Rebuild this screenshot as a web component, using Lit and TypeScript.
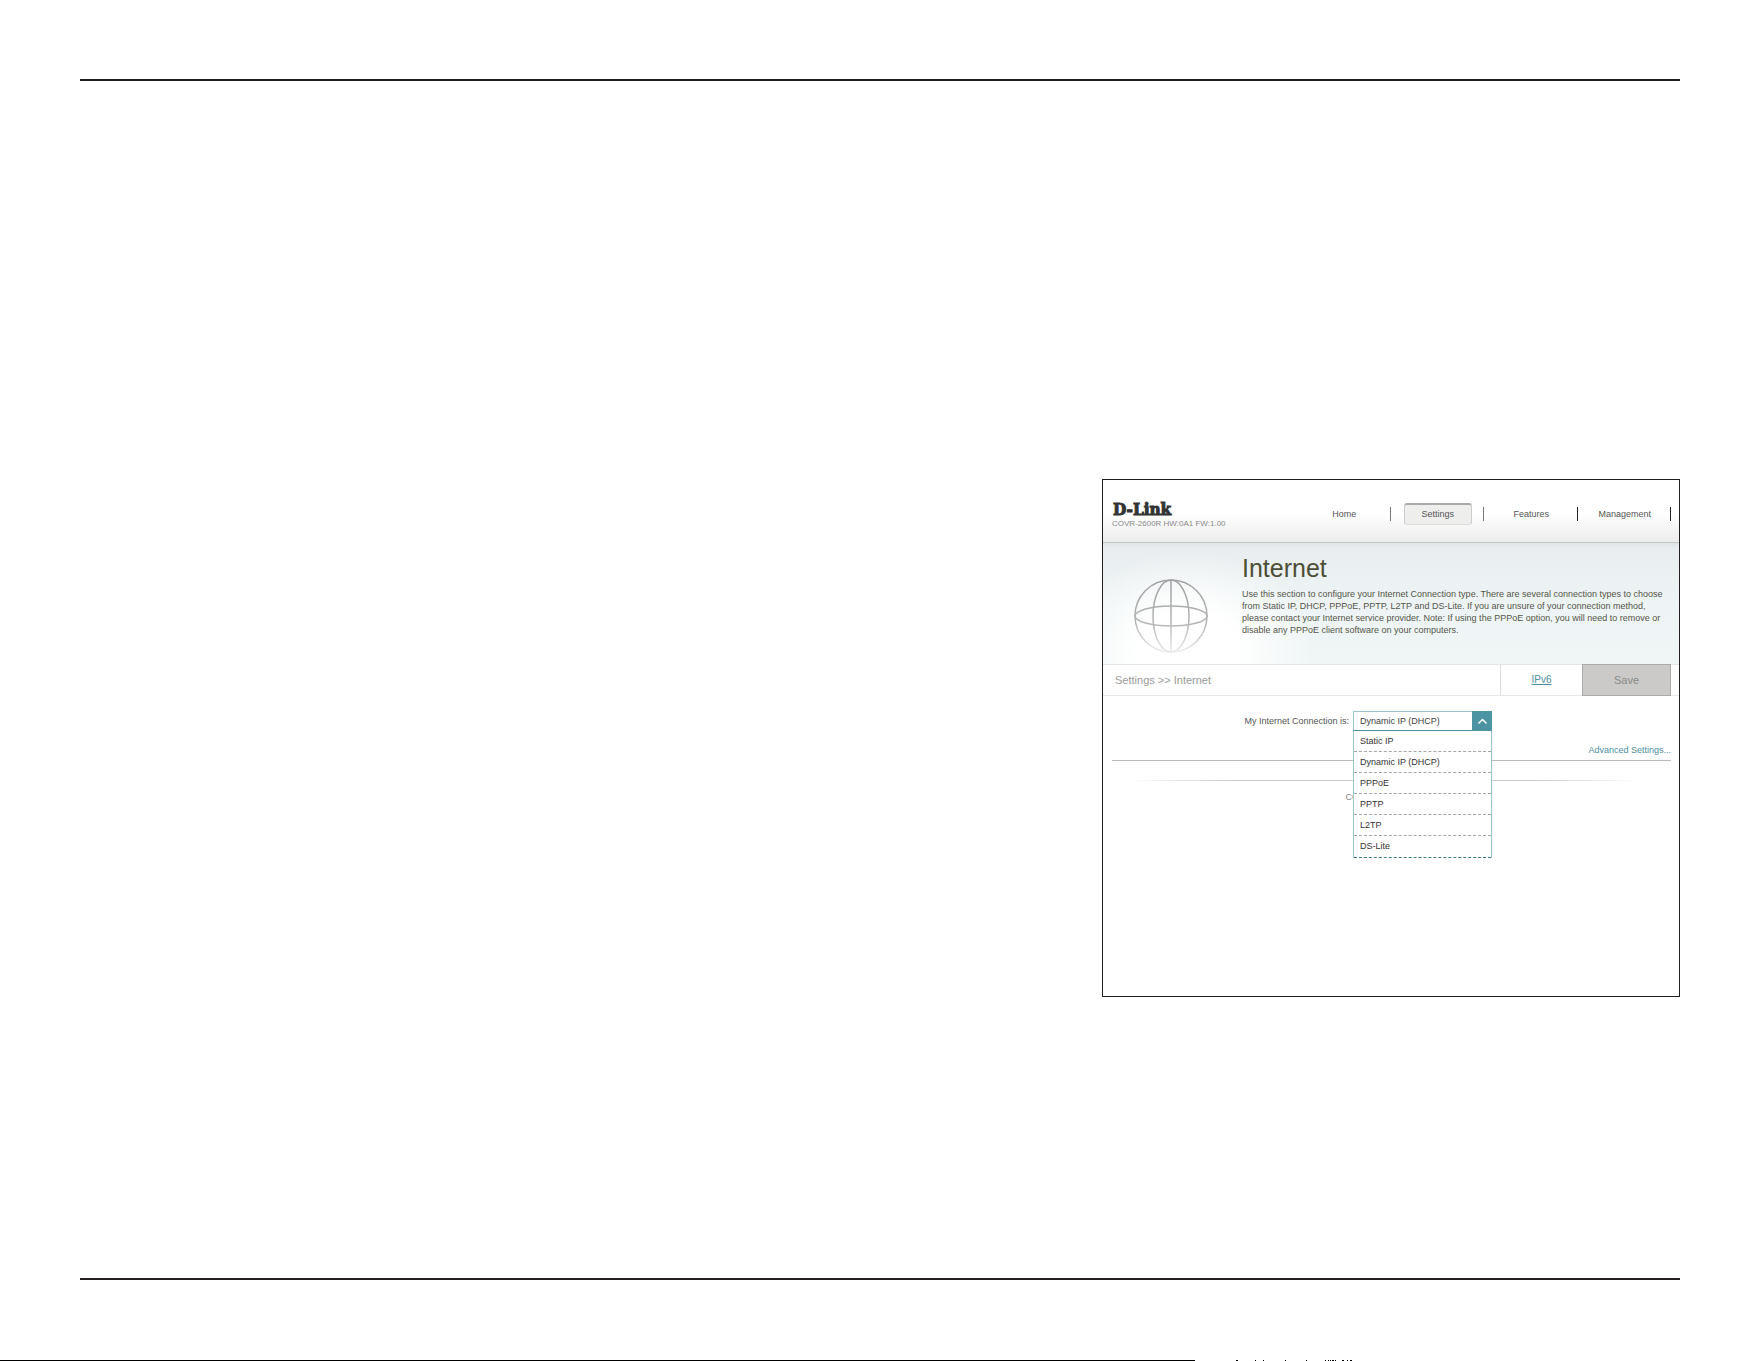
import { LitElement, html, css, svg } from "lit";
import { customElement, state } from "lit/decorators.js";

const NAV = ["Home", "Settings", "Features", "Management"];

const CONNECTION_TYPES = [
    "Static IP",
    "Dynamic IP (DHCP)",
    "PPPoE",
    "PPTP",
    "L2TP",
    "DS-Lite",
];

// [start, width] of the marks cut off by the page's lower edge
const EDGE_MARKS = [
    [1236, 2], [1255, 1], [1263, 1], [1285, 1], [1306, 1],
    [1325, 1], [1328, 1], [1330, 1], [1332, 2], [1335, 1],
    [1342, 2], [1347, 1], [1350, 2],
];

@customElement("connection-picker")
export class ConnectionPicker extends LitElement
{
    @state() value = "Dynamic IP (DHCP)";
    @state() open = true;

    static styles = css`
        :host
        {
            display         : flex;
            justify-content : center;
            align-items     : center;
            gap             : 4px;
            color           : #555;
        }

        .side
        {
            flex       : 1;
            text-align : right;
        }

        .side.end
        {
            flex : 0 1 183px;
        }

        .box
        {
            position : relative;
            flex     : 0 0 139px;
        }

        .select
        {
            display       : block;
            width         : 100%;
            height        : 20px;
            box-sizing    : border-box;
            margin        : 0;
            padding       : 0 24px 0 6px;
            border        : 1px solid #9cc5cd;
            border-bottom : 1px solid #4a8fa0;
            border-radius : 0;
            appearance    : none;
            background    : #fff;
            color         : #444;
            font          : inherit;
        }

        .arrow
        {
            position       : absolute;
            top            : 0;
            right          : 0;
            width          : 20px;
            height         : 20px;
            background     : #4c93a3;
            pointer-events : none;
        }

        .list
        {
            position     : absolute;
            z-index      : 1;
            top          : 100%;
            left         : 0;
            right        : 0;
            margin       : 0;
            padding      : 0;
            border       : solid #9cc5cd;
            border-width : 0 1px;
            background   : #fff;
            list-style   : none;
        }

        .option
        {
            height        : 21px;
            box-sizing    : border-box;
            padding       : 0 6px;
            border-bottom : 1px dashed #a5a5a5;
            color         : #333;
            line-height   : 20px;
            cursor        : pointer;
        }

        .option:last-child
        {
            height              : 22px;
            border-bottom-color : #3f7986;
        }
    `;

    pick (type: string)
    {
        this.value = type;
        this.open = false;
    }

    toggle (event: Event)
    {
        event.preventDefault();
        this.open = !this.open;
    }

    render ()
    {
        return html`
            <label class="side" for="type">My Internet Connection is:</label>
            <div class="box">
                <select id="type" class="select" .value=${ this.value } @mousedown=${ this.toggle }>
                    ${ CONNECTION_TYPES.map( type => html`
                        <option ?selected=${ type === this.value }>${ type }</option>
                    ` ) }
                </select>
                <svg class="arrow" viewBox="0 0 20 20" aria-hidden="true">
                    <path d="M6.500 12.500l4-4 4 4" fill="none" stroke="#fff" stroke-width="1.500"/>
                </svg>
                ${ this.open ? html`
                    <ul class="list" role="listbox" aria-label="Connection type">
                        ${ CONNECTION_TYPES.map( type => html`
                            <li class="option" role="option" aria-selected=${ type === this.value }
                                @click=${ () => this.pick( type ) }>${ type }</li>
                        ` ) }
                    </ul>
                ` : null }
            </div>
            <span class="side end"></span>
        `;
    }
}

@customElement("router-panel")
export class RouterPanel extends LitElement
{
    static styles = css`
        :host
        {
            display        : flex;
            flex-direction : column;
            min-height     : 516px;
            border         : 1px solid #231f20;
            background     : #fff;
            color          : #555;
            font-family    : "Liberation Sans", Arial, sans-serif;
            font-size      : 9px;
            line-height    : 12px;
        }

        a
        {
            color : #4c8fa0;
        }

        .header
        {
            display         : flex;
            justify-content : space-between;
            height          : 62px;
            padding         : 0 8px 0 9px;
            background      : linear-gradient(#fff 55%, #ececec);
        }

        .brand
        {
            padding-top : 20px;
            color       : #8a8a8a;
            font-size   : 8px;
            white-space : nowrap;
        }

        .logo
        {
            display     : flex;
            align-items : flex-start;
            padding-left : 1px;
            color       : #333;
            font-family : "DejaVu Serif Condensed", "DejaVu Serif", serif;
            font-size   : 17px;
            font-weight : bold;
            line-height : 18px;
            -webkit-text-stroke : 1px #333;
        }

        .nav
        {
            display               : grid;
            grid-template-columns : repeat(4, 1fr);
            align-items           : center;
            width                 : 374px;
            height                : 68px;
        }

        .item
        {
            display         : flex;
            align-items     : center;
            justify-content : center;
            height          : 14px;
            padding-left    : 2px;
            border-right    : 1px solid #777;
        }

        .item:nth-child(n + 3)
        {
            border-color : #222;
        }

        .link
        {
            color           : #555;
            text-decoration : none;
        }

        .link.active
        {
            width         : 66px;
            border        : 1px solid #ccc;
            border-top    : 2px solid #aaa;
            border-bottom-color : #ddd;
            border-radius : 3px;
            background    : #eeeeed;
            line-height   : 19px;
            text-align    : center;
        }

        .banner
        {
            display     : flex;
            height      : 121px;
            border-top  : 1px solid #c3c6c6;
            border-bottom : 1px solid #e3e6e6;
            background  :
                linear-gradient(#d9dddd80, transparent 5px),
                radial-gradient(ellipse 125px 100px at 85px 108px, #fff 40%, transparent),
                linear-gradient(#e8ecee, #eef4f5 50%, #f0f6f6);
        }

        .globe
        {
            flex    : 0 0 74px;
            height  : 74px;
            padding : 36px 34px 0 31px;
        }

        .intro
        {
            flex    : 1;
            padding : 9px 8px 0 0;
        }

        .title
        {
            margin      : 0 0 4px;
            color       : #4d4e36;
            font-size   : 25px;
            font-weight : normal;
            line-height : 32px;
        }

        .text
        {
            margin : 0;
            color  : #555548;
        }

        .bar
        {
            display       : flex;
            height        : 30px;
            padding-right : 8px;
            border-bottom : 1px solid #e8e8e8;
            font-size     : 11px;
            line-height   : 30px;
        }

        .crumbs
        {
            flex         : 1;
            padding-left : 12px;
            color        : #9b9b9b;
        }

        .tab
        {
            width       : 81px;
            border-left : 1px solid #ddd;
            font-size   : 10px;
            text-align  : center;
        }

        .save
        {
            width      : 89px;
            height     : 32px;
            margin     : -1px 0;
            padding    : 0;
            border     : 1px solid #aaa;
            background : #cbcac8;
            color      : #888;
            font       : inherit;
        }

        connection-picker
        {
            padding-top : 15px;
        }

        .advanced
        {
            margin         : 13px 8px 0 9px;
            padding-bottom : 4px;
            border-bottom  : 1px solid #bbb;
            text-align     : right;
        }

        .advanced a
        {
            text-decoration : none;
        }

        .fade
        {
            height     : 1px;
            margin     : 19px 38px 10px 24px;
            background : linear-gradient(90deg, transparent, #ccc 20%, #ccc 80%, transparent);
        }

        .copyright
        {
            margin     : 0;
            color      : #888;
            text-align : center;
        }
    `;

    render ()
    {
        return html`
            <header class="header">
                <div class="brand">
                    <div class="logo">D-Link</div>
                    COVR-2600R HW:0A1 FW:1.00
                </div>
                <nav class="nav">
                    ${ NAV.map( name => html`
                        <div class="item">
                            <a class="link ${ name === "Settings" ? "active" : "" }" href="#">${ name }</a>
                        </div>
                    ` ) }
                </nav>
            </header>
            <section class="banner">
                <div class="globe">
                    <svg viewBox="0 0 74 74" width="74" height="74" aria-hidden="true">
                        <defs>
                            <linearGradient id="metal" gradientUnits="userSpaceOnUse" x1="0" y1="0" x2="0" y2="74">
                                <stop offset="0" stop-color="#a0a0a0"/>
                                <stop offset="0.6" stop-color="#b5b5b5"/>
                                <stop offset="1" stop-color="#ececec"/>
                            </linearGradient>
                        </defs>
                        <g fill="none" stroke="url(#metal)" stroke-width="1.500">
                            <circle cx="37" cy="37" r="36"/>
                            <ellipse cx="37" cy="37" rx="18" ry="36"/>
                            <ellipse cx="37" cy="37" rx="36" ry="10"/>
                            <path d="M37 1L37.010 73"/>
                        </g>
                    </svg>
                </div>
                <div class="intro">
                    <h1 class="title">Internet</h1>
                    <p class="text">
                        Use this section to configure your Internet Connection type. There are several connection types to choose
                        from Static IP, DHCP, PPPoE, PPTP, L2TP and DS-Lite. If you are unsure of your connection method,
                        please contact your Internet service provider. Note: If using the PPPoE option, you will need to remove or
                        disable any PPPoE client software on your computers.
                    </p>
                </div>
            </section>
            <div class="bar">
                <div class="crumbs">Settings &gt;&gt; Internet</div>
                <div class="tab"><a href="#">IPv6</a></div>
                <button class="save" type="button">Save</button>
            </div>
            <connection-picker></connection-picker>
            <div class="advanced"><a href="#">Advanced Settings...</a></div>
            <div class="fade"></div>
            <p class="copyright">COPYRIGHT © D-Link</p>
        `;
    }
}

@customElement("app-root")
export class AppRoot extends LitElement
{
    static styles = css`
        :host
        {
            display        : flex;
            flex-direction : column;
            min-height     : 100vh;
            background     : #fff;
        }

        .page
        {
            flex                  : 1;
            display               : grid;
            grid-template-columns : 511fr 289fr;
            align-items           : start;
            margin                : 79px 81px 80px 80px;
            padding               : 398px 0 0;
            border                : solid #231f20;
            border-width          : 2px 0;
        }

        router-panel
        {
            grid-column : 2;
        }

        .edge
        {
            display : block;
            width   : 100%;
            height  : 1px;
        }
    `;

    render ()
    {
        return html`
            <main class="page">
                <router-panel></router-panel>
            </main>
            <svg class="edge" aria-hidden="true">
                <rect width="1195" height="1"/>
                ${ EDGE_MARKS.map( ([ x, width ]) => svg`<rect x=${ x } width=${ width } height="1"/>` ) }
            </svg>
        `;
    }
}
